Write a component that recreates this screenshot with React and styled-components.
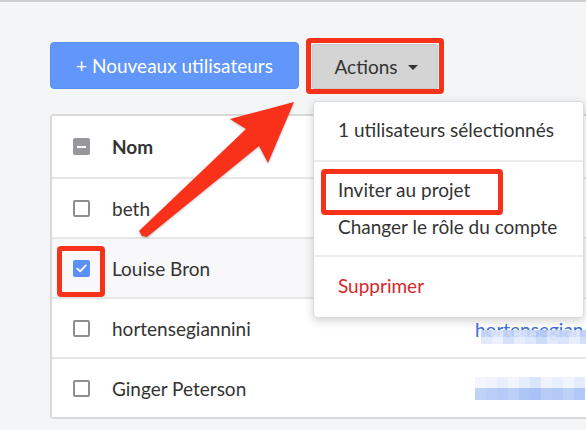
import React from "react";
import styled, { createGlobalStyle } from "styled-components";

const GlobalStyle = createGlobalStyle`
  html, body {
    margin: 0;
    padding: 0;
    background: #f4f5f7;
  }
  body {
    font-family: Lato, "Open Sans", "Liberation Sans", sans-serif;
    color: #333;
  }
`;

const Page = styled.div`
  position: relative;
  width: 586px;
  height: 430px;
  overflow: hidden;
  background: #f4f5f7;
`;

const TopBar = styled.div`
  height: 2px;
  background: #cfd0d2;
`;

const Content = styled.div`
  padding: 40px 0 0 50px;
`;

const Toolbar = styled.div`
  display: flex;
  align-items: flex-end;
  gap: 13px;
`;

const PrimaryButton = styled.button`
  width: 249px;
  height: 47px;
  border: 1px solid #5a8ff2;
  border-radius: 4px;
  background: #6196fa;
  color: #fff;
  font-family: inherit;
  font-size: 19px;
  padding: 0;
  cursor: pointer;
`;

const DropdownWrap = styled.div`
  position: relative;
`;

const ActionsButton = styled.button`
  display: flex;
  align-items: center;
  justify-content: center;
  gap: 10px;
  width: 126px;
  height: 45px;
  border: 1px solid #c8c8c8;
  border-radius: 2px;
  background: #d4d4d4;
  color: #333;
  font-family: inherit;
  font-size: 19px;
  padding: 0 0 0 2px;
`;

const Caret = styled.span`
  width: 0;
  height: 0;
  border-left: 5px solid transparent;
  border-right: 5px solid transparent;
  border-top: 5px solid #333;
  margin-top: 2px;
`;

const Highlight = styled.div`
  position: absolute;
  top: ${(p) => p.$top}px;
  left: ${(p) => p.$left}px;
  width: ${(p) => p.$width}px;
  height: ${(p) => p.$height}px;
  border: 5px solid #f7321a;
  border-radius: 4px;
  box-sizing: border-box;
  pointer-events: none;
  z-index: 3;
`;

const Menu = styled.div`
  position: absolute;
  top: 57px;
  left: 1px;
  width: 271px;
  box-sizing: border-box;
  background: #fff;
  border: 1px solid #dcdcdc;
  border-radius: 4px;
  box-shadow: 0 3px 10px rgba(0, 0, 0, 0.18);
  z-index: 2;
`;

const MenuSection = styled.div`
  padding: ${(p) => p.$pad};
  border-bottom: ${(p) => (p.$last ? "none" : "2px solid #ececec")};
`;

const MenuItem = styled.div`
  position: relative;
  height: 37px;
  display: flex;
  align-items: center;
  padding-left: 24px;
  font-size: 19px;
  color: ${(p) => (p.$danger ? "#d8262a" : "#333")};
  white-space: nowrap;
`;

const Table = styled.div`
  margin-top: 25px;
  width: 580px;
  background: #fff;
  border: 2px solid #d8d8d8;
  border-radius: 4px;
`;

const Row = styled.div`
  display: grid;
  grid-template-columns: 423px 1fr;
  height: ${(p) => (p.$header ? 61 : 58)}px;
  background: ${(p) => (p.$selected ? "#f8f8fa" : "#fff")};
  border-bottom: ${(p) => (p.$last ? "none" : "2px solid #e6e6e6")};
`;

const NameCell = styled.div`
  position: relative;
  display: flex;
  align-items: center;
  gap: 22px;
  padding-left: 21px;
  font-size: 19px;
  font-weight: ${(p) => (p.$bold ? 700 : 400)};
  color: #333;
`;

const BoxWrap = styled.span`
  position: relative;
  display: flex;
`;

const Box = styled.span`
  width: 17px;
  height: 17px;
  box-sizing: border-box;
  border-radius: 2px;
  display: flex;
  align-items: center;
  justify-content: center;
  border: 2px solid ${(p) => (p.$state === "off" ? "#8e8e8e" : "transparent")};
  background: ${(p) =>
    p.$state === "on" ? "#5b8ff9" : p.$state === "mixed" ? "#97989c" : "#fff"};
`;

const Dash = styled.span`
  width: 9px;
  height: 2px;
  background: #fff;
`;

const EmailCell = styled.div`
  display: flex;
  align-items: center;
  overflow: hidden;
`;

const EmailText = styled.span`
  position: relative;
  font-size: 19px;
  color: #3d6fd9;
  white-space: nowrap;
  margin-top: 2px;
`;

const Mosaic = styled.div`
  display: grid;
  grid-template-columns: repeat(10, 11px);
  grid-auto-rows: ${(p) => p.$cell}px;
  ${(p) =>
    p.$overlay &&
    `
    position: absolute;
    top: 12px;
    left: 6px;
    opacity: 0.92;
  `}
`;

const Tile = styled.span`
  background: ${(p) => p.$c};
`;

const ArrowSvg = styled.svg`
  position: absolute;
  top: 0;
  left: 0;
  pointer-events: none;
  z-index: 4;
  filter: drop-shadow(0 1px 1px rgba(0, 0, 0, 0.25));
`;

const Check = () => (
  <svg width="11" height="9" viewBox="0 0 11 9">
    <path d="M1.2 4.6 L4.2 7.4 L9.8 1.4" fill="none" stroke="#fff" strokeWidth="1.8" strokeLinecap="round" strokeLinejoin="round" />
  </svg>
);

const Checkbox = ({ state }) => (
  <Box $state={state}>
    {state === "on" && <Check />}
    {state === "mixed" && <Dash />}
  </Box>
);

const mosaic3 = [
  "#c6d6f9", "#dbe6fc", "#c2d3f8", "#d5e2fb", "#c9d9fa", "#b4caf6", "#cfdcfa", "#c4d4f8", "#d9e4fb", "#bfd1f8",
  "#dfe8fd", "#eaf0fe", "#d3e0fb", "#e4ecfd", "#dbe5fc", "#c9d8fa", "#e0e9fd", "#d6e2fb", "#e6edfd", "#d0ddfa",
];
const mosaic4 = [
  "#f3f6fe", "#eef3fe", "#e8effd", "#f0f5fe", "#e6eefd", "#dae5fc", "#eef3fe", "#e9f0fd", "#f1f5fe", "#e5edfd",
  "#bfd2f8", "#b9cdf7", "#b5caf6", "#bccff7", "#adc4f5", "#a9c1f5", "#b8ccf7", "#b4c9f6", "#bdd0f8", "#b1c7f6",
];

const users = [
  { name: "beth", state: "off" },
  { name: "Louise Bron", state: "on", selected: true },
  { name: "hortensegiannini", state: "off", email: "hortensegian" },
  { name: "Ginger Peterson", state: "off", blurred: true },
];

export default function App() {
  return (
    <>
      <GlobalStyle />
      <Page>
        <TopBar />
        <Content>
          <Toolbar>
            <PrimaryButton>+ Nouveaux utilisateurs</PrimaryButton>
            <DropdownWrap>
              <ActionsButton>
                Actions <Caret />
              </ActionsButton>
              <Highlight $top={-6} $left={-6} $width={138} $height={56} />
              <Menu>
                <MenuSection $pad="9px 0 12px">
                  <MenuItem>1 utilisateurs sélectionnés</MenuItem>
                </MenuSection>
                <MenuSection $pad="9px 0 10px">
                  <MenuItem>
                    Inviter au projet
                    <Highlight $top={-2} $left={7} $width={182} $height={46} />
                  </MenuItem>
                  <MenuItem>Changer le rôle du compte</MenuItem>
                </MenuSection>
                <MenuSection $pad="10px 0 13px" $last>
                  <MenuItem $danger>Supprimer</MenuItem>
                </MenuSection>
              </Menu>
            </DropdownWrap>
          </Toolbar>

          <Table>
            <Row $header>
              <NameCell $bold>
                <Checkbox state="mixed" />
                Nom
              </NameCell>
              <EmailCell />
            </Row>
            {users.map((u, i) => (
              <Row key={u.name} $selected={u.selected} $last={i === users.length - 1}>
                <NameCell>
                  <BoxWrap>
                    <Checkbox state={u.state} />
                    {u.selected && <Highlight $top={-14} $left={-16} $width={48} $height={51} />}
                  </BoxWrap>
                  {u.name}
                </NameCell>
                <EmailCell>
                  {u.email && (
                    <EmailText>
                      {u.email}
                      <Mosaic $overlay $cell={7}>
                        {mosaic3.map((c, k) => (
                          <Tile key={k} $c={c} />
                        ))}
                      </Mosaic>
                    </EmailText>
                  )}
                  {u.blurred && (
                    <Mosaic $cell={11.5}>
                      {mosaic4.map((c, k) => (
                        <Tile key={k} $c={c} />
                      ))}
                    </Mosaic>
                  )}
                </EmailCell>
              </Row>
            ))}
          </Table>
        </Content>
        <ArrowSvg width="586" height="430" viewBox="0 0 586 430">
          <polygon
            points="294,102 268,163 259,146 147,237 142,236 139,231 246,129 230,119"
            fill="#f9301a"
            strokeLinejoin="round"
          />
        </ArrowSvg>
      </Page>
    </>
  );
}
